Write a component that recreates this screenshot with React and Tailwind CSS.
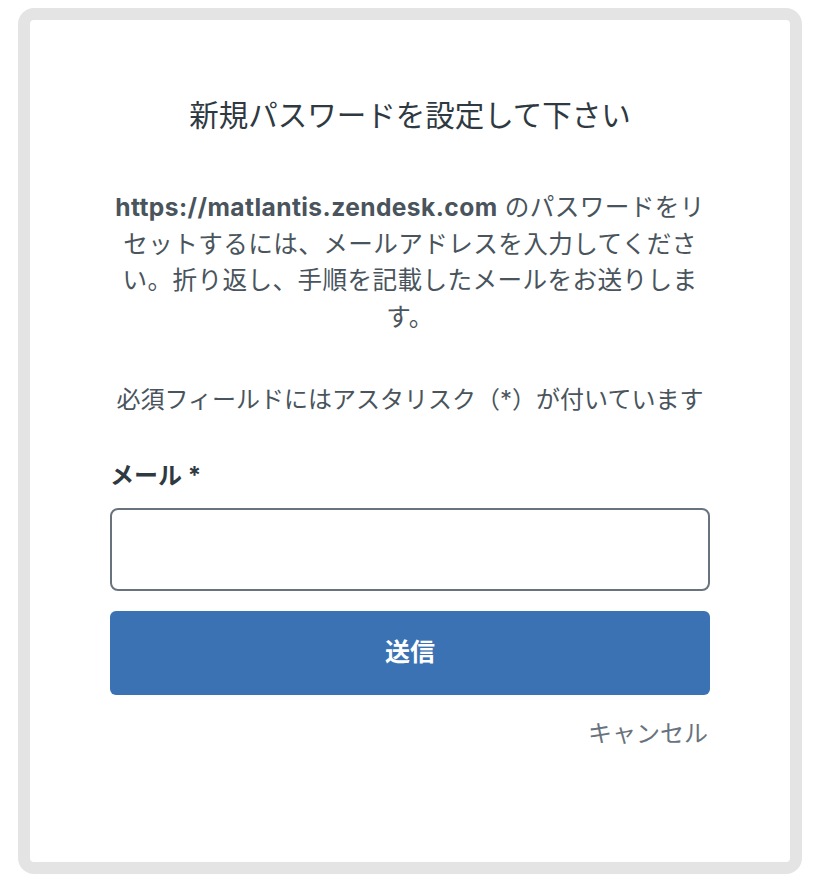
export default function App() {
  return (
    <div
      className="w-[814px] h-[890px] bg-white pt-[8px] pl-[18px]"
      style={{ fontFamily: '"Inter", "Noto Sans CJK JP", sans-serif' }}
    >
      {/* 外枠 */}
      <div className="w-[784px] h-[866px] border-[12px] border-[#e4e4e4] rounded-[16px] bg-white">
        <div className="px-[80px] pt-[77px] flex flex-col">
          <h1 className="text-center text-[29.5px] leading-[36px] font-normal text-[#2f3941]">
            新規パスワードを設定して下さい
          </h1>

          <p className="mt-[56px] text-center text-[24.6px] leading-[36.5px] tracking-[0.4px] text-[#49545c]">
            <span className="font-bold">https://matlantis.zendesk.com</span> のパスワードをリ
            <br />
            セットするには、メールアドレスを入力してくださ
            <br />
            い。折り返し、手順を記載したメールをお送りしま
            <br />
            す。
          </p>

          <p className="mt-[47px] text-center text-[24px] leading-[36px] text-[#49545c]">
            必須フィールドにはアスタリスク（*）が付いています
          </p>

          <label className="mt-[40px] text-[24px] leading-[36px] font-bold text-[#2f3941]">
            メール *
          </label>
          <input
            type="email"
            className="mt-[14px] h-[83px] w-full border-2 border-[#68737d] rounded-[8px] px-4 text-[24px] outline-none"
          />

          <button className="mt-[20px] h-[84px] w-full rounded-[6px] bg-[#3b72b3] text-white text-[25px] font-bold">
            送信
          </button>

          <div className="mt-[21px] flex justify-end">
            <a href="#" className="text-[24px] leading-[36px] text-[#68737d] pr-[2px]">
              キャンセル
            </a>
          </div>
        </div>
      </div>
    </div>
  );
}
